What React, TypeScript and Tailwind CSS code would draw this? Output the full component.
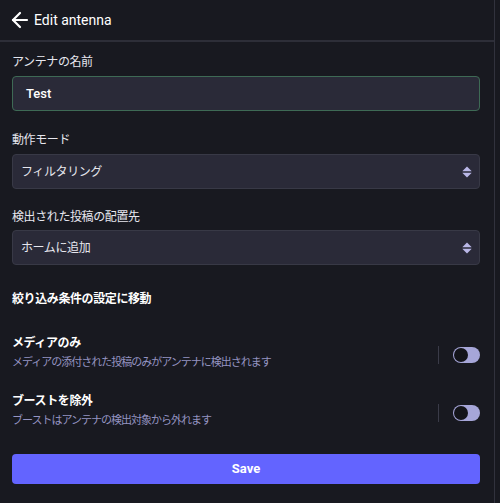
import { ArrowLeft } from 'lucide-react'

const font = { fontFamily: 'Roboto, "Noto Sans CJK JP", sans-serif' }

function Chevrons() {
  return (
    <svg width="10" height="12" viewBox="0 0 10 12" className="text-[#b9b7e6]">
      <path d="M5 0.5 L9.5 5 H0.5 Z" fill="currentColor" />
      <rect x="0.5" y="5.5" width="9" height="1" fill="currentColor" opacity="0.5" />
      <path d="M5 11.5 L9.5 7 H0.5 Z" fill="currentColor" />
    </svg>
  )
}

function Toggle() {
  return (
    <div className="flex h-[16px] w-[27px] items-center rounded-full bg-[#a6a6d8] px-[1px]">
      <div className="h-[14px] w-[14px] rounded-full bg-[#131419]" />
    </div>
  )
}

function ToggleRow({ title, desc }: { title: string; desc: string }) {
  return (
    <div className="flex items-start">
      <div className="flex-1">
        <div className="text-[12px] font-bold leading-[18px] tracking-[-0.4px] text-white">{title}</div>
        <div className="mt-[3px] text-[11px] leading-[16px] tracking-[-1px] text-[#9594c2]">{desc}</div>
      </div>
      <div className="flex items-center pt-[12px]">
        <div className="mr-[14px] h-[18px] w-px bg-[#3a3b48]" />
        <Toggle />
      </div>
    </div>
  )
}

export default function App() {
  return (
    <div className="flex h-[503px] w-[500px] bg-[#181920] text-white" style={font}>
      <div className="w-[495px] border-r border-[#31323d]">
        <div className="flex h-[42px] items-center gap-[2px] border-b-2 border-[#2d2e38] pl-[8px]">
          <ArrowLeft size={24} strokeWidth={2.2} className="text-white" />
          <span className="text-[14px] text-white">Edit antenna</span>
        </div>

        <div className="pl-[12px] pr-[14px] pt-[10px]">
          <div className="text-[12px] leading-[20px] tracking-[-0.4px] text-[#e6e6ee]">アンテナの名前</div>
          <div className="mt-[4px] flex h-[35px] items-center rounded-[4px] border border-[#3e6a55] bg-[#2a2a38] px-[13px] text-[13px] font-medium text-white">
            Test
          </div>

          <div className="mt-[19px] text-[12px] leading-[20px] tracking-[-0.4px] text-[#e6e6ee]">動作モード</div>
          <div className="mt-[4px] flex h-[35px] items-center justify-between rounded-[4px] border border-[#383946] bg-[#2a2a38] pl-[8px] pr-[7px] text-[12px] tracking-[-0.4px] text-[#e6e6ee]">
            <span>フィルタリング</span>
            <Chevrons />
          </div>

          <div className="mt-[18px] text-[12px] leading-[20px] tracking-[-0.4px] text-[#e6e6ee]">検出された投稿の配置先</div>
          <div className="mt-[3px] flex h-[35px] items-center justify-between rounded-[4px] border border-[#383946] bg-[#2a2a38] pl-[8px] pr-[7px] text-[12px] tracking-[-0.4px] text-[#e6e6ee]">
            <span>ホームに追加</span>
            <Chevrons />
          </div>

          <div className="mt-[24px] text-[12px] font-bold leading-[20px] tracking-[-0.4px] text-white">絞り込み条件の設定に移動</div>

          <div className="mt-[25px]">
            <ToggleRow title="メディアのみ" desc="メディアの添付された投稿のみがアンテナに検出されます" />
          </div>
          <div className="mt-[21px]">
            <ToggleRow title="ブーストを除外" desc="ブーストはアンテナの検出対象から外れます" />
          </div>

          <button
            type="button"
            className="mt-[25px] flex h-[30px] w-full items-center justify-center rounded-[4px] bg-[#6364ff] text-[13px] font-bold text-white"
          >
            Save
          </button>
        </div>
      </div>
    </div>
  )
}
